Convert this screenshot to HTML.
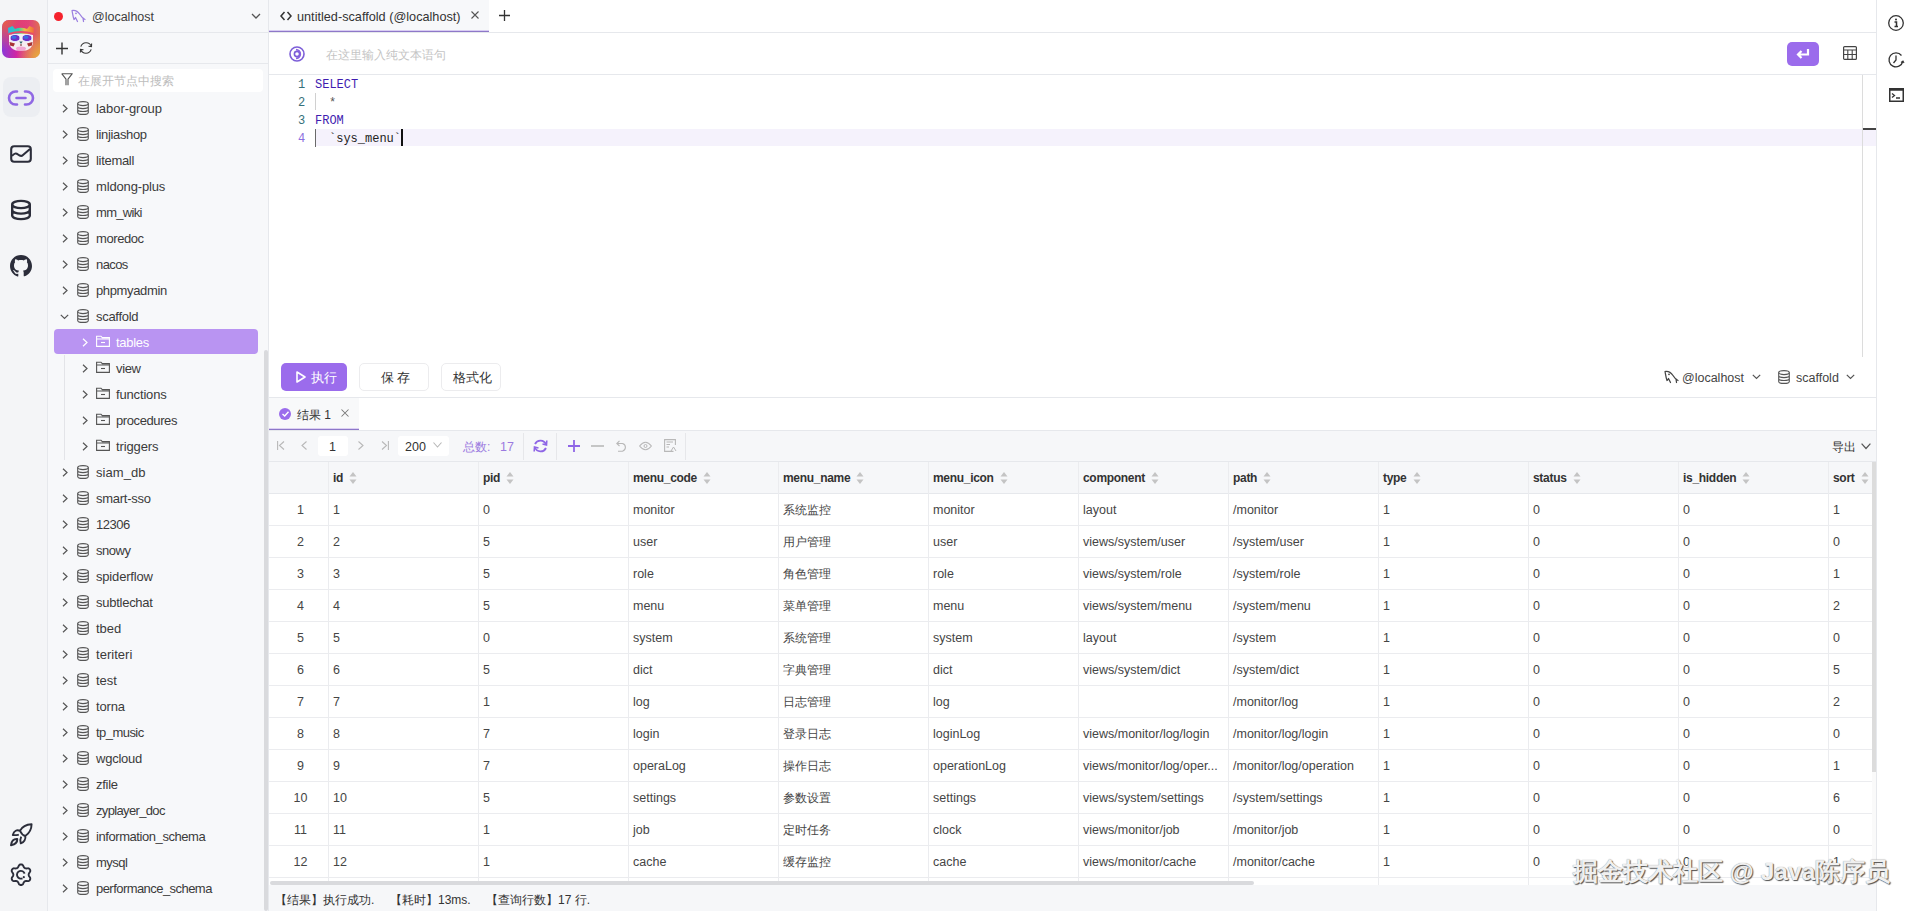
<!DOCTYPE html><html><head><meta charset="utf-8"><style>
*{box-sizing:border-box;margin:0;padding:0}
html,body{width:1914px;height:911px;overflow:hidden;background:#fff;font-family:"Liberation Sans",sans-serif;font-size:13px;color:#3b3b3b}
.abs{position:absolute}
svg{position:absolute;overflow:visible}
.t{position:absolute;white-space:nowrap}
</style></head><body>
<div class="abs" style="left:0px;top:0px;width:47px;height:911px;background:#f4f5f7;"></div>
<div class="abs" style="left:47px;top:0px;width:1px;height:911px;background:#e6e8ec;"></div>
<div class="abs" style="left:2px;top:20px;width:38px;height:38px;border-radius:7px;overflow:hidden;background:linear-gradient(90deg,#8a3ad8 0%,#d424a0 40%,#e0407e 70%,#e07050 100%)">
<div class="abs" style="left:0;top:0;width:38px;height:38px;background:radial-gradient(circle at 0% 0%,#f2603a 0%,rgba(240,80,80,0) 55%)"></div>
<div class="abs" style="left:0;top:0;width:38px;height:38px;background:radial-gradient(circle at 100% 100%,#e8b03a 0%,rgba(230,160,60,0) 45%)"></div>
<svg style="left:0;top:0" width="38" height="38" viewBox="0 0 38 38">
<defs><linearGradient id="fur" x1="0" y1="0" x2="1" y2="0"><stop offset="0" stop-color="#2ab8e0"/><stop offset="0.4" stop-color="#30d0b0"/><stop offset="0.65" stop-color="#f0c040"/><stop offset="1" stop-color="#f06a3a"/></linearGradient></defs>
<path d="M6.5 14 L6 8 L10.5 6 L13 9 Q19 6.5 25 9 L27.5 6 L32 8 L31.5 14 Z" fill="url(#fur)"/>
<path d="M6.5 13 Q19 9 31.5 13 L31.5 15 Q19 11 6.5 15Z" fill="#e84a6a"/>
<path d="M7 15 Q19 12.5 31 15 L31 24 Q29 29 24 30.5 L14 30.5 Q9 29 7 24 Z" fill="#f6eef0"/>
<ellipse cx="13" cy="18" rx="5" ry="3.6" fill="#7030c8" stroke="#e8f4ff" stroke-width="0.9"/>
<ellipse cx="25" cy="18" rx="5" ry="3.6" fill="#7030c8" stroke="#e8f4ff" stroke-width="0.9"/>
<ellipse cx="12" cy="17.3" rx="2.6" ry="1.7" fill="#3a70e0"/>
<ellipse cx="24" cy="17.3" rx="2.6" ry="1.7" fill="#3a70e0"/>
<path d="M7.5 22 L13 23.5 L11.5 26.5 L8 25.5Z M30.5 22 L25 23.5 L26.5 26.5 L30 25.5Z" fill="#a83434"/>
<path d="M17.3 21.5 L20.7 21.5 L19 24Z" fill="#2a6a70"/>
<path d="M19 24 V26" stroke="#6a2020" stroke-width="1"/>
<ellipse cx="19" cy="28.6" rx="5" ry="2.1" fill="#f2a6d2"/>
</svg></div>
<div class="abs" style="left:3px;top:77px;width:37px;height:40px;background:#eceef2;border-radius:8px;"></div>
<svg style="left:8px;top:89px" width="26" height="19" viewBox="0 0 26 19"><path d="M9 2.5 H7.5 A6.5 6.5 0 0 0 7.5 15.5 H9 M17 2.5 H18.5 A6.5 6.5 0 0 1 18.5 15.5 H17 M8.5 9 H17.5" fill="none" stroke="#9068e4" stroke-width="2.6" stroke-linecap="round"/></svg>
<svg style="left:10px;top:145px" width="22" height="18" viewBox="0 0 22 18"><rect x="1.2" y="1.2" width="19.6" height="15.6" rx="3" fill="none" stroke="#2b2d3a" stroke-width="2.1"/><path d="M2 11 Q5 7 8 9.5 T13 10 L20 4" fill="none" stroke="#2b2d3a" stroke-width="2"/></svg>
<svg style="left:11px;top:200px" width="20" height="20" viewBox="0 0 20 20"><ellipse cx="10" cy="4.5" rx="8.8" ry="3.6" fill="none" stroke="#2b2d3a" stroke-width="2.4"/><path d="M1.2 4.5 V15.5 A8.8 3.6 0 0 0 18.8 15.5 V4.5 M1.2 10 A8.8 3.6 0 0 0 18.8 10" fill="none" stroke="#2b2d3a" stroke-width="2.4"/></svg>
<svg style="left:10px;top:255px" width="22" height="22" viewBox="0 0 22 22"><path fill="#2b2d3a" d="M11 0C4.9 0 0 4.9 0 11c0 4.9 3.2 9 7.5 10.5.5.1.8-.2.8-.6v-2.1c-3.1.7-3.7-1.3-3.7-1.3-.5-1.3-1.2-1.6-1.2-1.6-1-.7.1-.7.1-.7 1.1.1 1.7 1.1 1.7 1.1 1 1.7 2.6 1.2 3.2.9.1-.7.4-1.2.7-1.5-2.5-.3-5.1-1.2-5.1-5.4 0-1.2.4-2.2 1.1-3-.1-.3-.5-1.4.1-2.9 0 0 .9-.3 3 1.1.9-.2 1.8-.4 2.8-.4s1.9.1 2.8.4c2.1-1.4 3-1.1 3-1.1.6 1.5.2 2.6.1 2.9.7.8 1.1 1.8 1.1 3 0 4.2-2.6 5.1-5.1 5.4.4.3.8 1 .8 2v3c0 .3.2.7.8.6C18.8 20 22 15.9 22 11 22 4.9 17.1 0 11 0z"/></svg>
<svg style="left:6px;top:818px" width="30" height="32" viewBox="0 0 30 32"><path d="M14 12.8 C16 9 20 6.5 25.6 6.3 C25.5 11 23 15.5 19.3 18 Q16 17 14 12.8 Z M14 12.8 C11 11.5 8 12.5 6.8 17 C9 17.3 11 17 12.8 16.8 M19.3 18 C20 21 18 24.5 14.8 25.4 C14.2 23 14.2 20.5 15.2 18.6 M5 27.2 C5.5 23 8 20.8 11.3 21 C11.5 24.5 8.5 26.5 5 27.2 Z" fill="none" stroke="#2b2d3a" stroke-width="1.9" stroke-linejoin="round"/></svg>
<svg style="left:11px;top:864px" width="20" height="22" viewBox="0 0 20 22"><path d="M17.65 10.70 L17.71 11.21 L17.87 11.74 L18.15 12.32 L18.69 13.03 L19.17 13.81 L19.29 14.55 L19.22 15.25 L18.96 15.87 L18.55 16.41 L17.98 16.82 L17.28 17.09 L16.36 17.06 L15.48 16.95 L14.83 17.00 L14.29 17.12 L13.83 17.33 L13.42 17.63 L13.04 18.04 L12.67 18.57 L12.33 19.39 L11.89 20.20 L11.31 20.67 L10.67 20.96 L10.00 21.05 L9.33 20.96 L8.69 20.67 L8.11 20.20 L7.67 19.39 L7.33 18.57 L6.96 18.04 L6.58 17.63 L6.18 17.33 L5.71 17.12 L5.17 17.00 L4.52 16.95 L3.64 17.06 L2.72 17.09 L2.02 16.82 L1.45 16.41 L1.04 15.87 L0.78 15.25 L0.71 14.55 L0.83 13.81 L1.31 13.03 L1.85 12.32 L2.13 11.74 L2.29 11.21 L2.35 10.70 L2.29 10.19 L2.13 9.66 L1.85 9.08 L1.31 8.37 L0.83 7.59 L0.71 6.85 L0.78 6.15 L1.04 5.53 L1.45 4.99 L2.02 4.58 L2.72 4.31 L3.64 4.34 L4.52 4.45 L5.17 4.40 L5.71 4.28 L6.17 4.07 L6.58 3.77 L6.96 3.36 L7.33 2.83 L7.67 2.01 L8.11 1.20 L8.69 0.73 L9.33 0.44 L10.00 0.35 L10.67 0.44 L11.31 0.73 L11.89 1.20 L12.33 2.01 L12.67 2.83 L13.04 3.36 L13.42 3.77 L13.83 4.07 L14.29 4.28 L14.83 4.40 L15.48 4.45 L16.36 4.34 L17.28 4.31 L17.98 4.58 L18.55 4.99 L18.96 5.52 L19.22 6.15 L19.29 6.85 L19.17 7.59 L18.69 8.37 L18.15 9.08 L17.87 9.66 L17.71 10.19Z" fill="none" stroke="#2b2d3a" stroke-width="1.9" stroke-linejoin="round"/><path d="M13.6 9.6 A3.9 3.9 0 1 0 11.5 14.3" fill="none" stroke="#2b2d3a" stroke-width="1.9"/><circle cx="12.8" cy="13.2" r="1.1" fill="#2b2d3a"/></svg>
<div class="abs" style="left:48px;top:0px;width:220px;height:911px;background:#f7f8fa;"></div>
<div class="abs" style="left:268px;top:0px;width:1px;height:911px;background:#e6e8ec;"></div>
<div class="abs" style="left:48px;top:32px;width:220px;height:1px;background:#e6e8ec;"></div>
<div class="abs" style="left:48px;top:63px;width:220px;height:1px;background:#e6e8ec;"></div>
<div class="abs" style="left:53.5px;top:11.5px;width:9px;height:9px;border-radius:50%;background:#f5222d"></div>
<svg style="left:71px;top:9px" width="14" height="14" viewBox="0 0 14 14"><path d="M1 1.5 C4 1 7 2.5 9 5.5 C10.5 8 12 9.5 14 10.5 M12 9 L12.5 12.5 M1 1.5 C1.5 4 2 8 3 10.5 L4.5 8.5 L6.5 12.5" fill="none" stroke="#9b7fe0" stroke-width="1.25" stroke-linejoin="round" stroke-linecap="round"/><circle cx="5" cy="4.3" r="0.9" fill="#9b7fe0"/></svg>
<div class="t" style="left:92px;top:10px;font-size:12.5px;line-height:14px;color:#3d3d3d;font-weight:normal;">@localhost</div>
<svg style="left:251px;top:13px" width="10" height="7" viewBox="0 0 10 7"><path d="M1 1 L5 5 L9 1" fill="none" stroke="#555" stroke-width="1.3"/></svg>
<svg style="left:56px;top:42px" width="12" height="13" viewBox="0 0 12 13"><path d="M6 0.5 V12.5 M0 6.5 H12" fill="none" stroke="#333" stroke-width="1.4"/></svg>
<svg style="left:79px;top:41px" width="14" height="14" viewBox="0 0 14 14"><path d="M12.3 5.2 A5.6 5.6 0 0 0 1.8 5.6 M1.7 8.8 A5.6 5.6 0 0 0 12.2 8.4" fill="none" stroke="#3a3a3a" stroke-width="1.1"/><path d="M12.6 2.4 L12.5 5.6 L9.5 5.2" fill="none" stroke="#3a3a3a" stroke-width="1.1"/><path d="M1.4 11.6 L1.5 8.4 L4.5 8.8" fill="none" stroke="#3a3a3a" stroke-width="1.1"/></svg>
<div class="abs" style="left:53px;top:69px;width:210px;height:23px;background:#fff;border-radius:4px;"></div>
<svg style="left:61px;top:73px" width="12" height="13" viewBox="0 0 12 13"><path d="M0.7 0.7 H11.3 L7 6.2 V12.3 M5 12.3 V6.2 L0.7 0.7" fill="none" stroke="#555" stroke-width="1.1" stroke-linejoin="round"/></svg>
<div class="t" style="left:78px;top:74px;font-size:12px;line-height:14px;color:#bdbdbd;font-weight:normal;">在展开节点中搜索</div>
<svg style="left:62px;top:104px" width="6" height="9" viewBox="0 0 6 9"><path d="M1 0.8 L5 4.5 L1 8.2" fill="none" stroke="#555" stroke-width="1.2"/></svg>
<svg style="left:77px;top:101px" width="12" height="14" viewBox="0 0 12 14"><ellipse cx="6" cy="2.6" rx="5.3" ry="2" fill="none" stroke="#555" stroke-width="1.1"/><path d="M0.7 2.6 V11.4 A5.3 2 0 0 0 11.3 11.4 V2.6 M0.7 5.6 A5.3 2 0 0 0 11.3 5.6 M0.7 8.5 A5.3 2 0 0 0 11.3 8.5" fill="none" stroke="#555" stroke-width="1.1"/></svg>
<div class="t" style="left:96px;top:101px;font-size:13px;line-height:15px;color:#3b3b3b;font-weight:normal;letter-spacing:-0.05px;">labor-group</div>
<svg style="left:62px;top:130px" width="6" height="9" viewBox="0 0 6 9"><path d="M1 0.8 L5 4.5 L1 8.2" fill="none" stroke="#555" stroke-width="1.2"/></svg>
<svg style="left:77px;top:127px" width="12" height="14" viewBox="0 0 12 14"><ellipse cx="6" cy="2.6" rx="5.3" ry="2" fill="none" stroke="#555" stroke-width="1.1"/><path d="M0.7 2.6 V11.4 A5.3 2 0 0 0 11.3 11.4 V2.6 M0.7 5.6 A5.3 2 0 0 0 11.3 5.6 M0.7 8.5 A5.3 2 0 0 0 11.3 8.5" fill="none" stroke="#555" stroke-width="1.1"/></svg>
<div class="t" style="left:96px;top:127px;font-size:13px;line-height:15px;color:#3b3b3b;font-weight:normal;letter-spacing:-0.35px;">linjiashop</div>
<svg style="left:62px;top:156px" width="6" height="9" viewBox="0 0 6 9"><path d="M1 0.8 L5 4.5 L1 8.2" fill="none" stroke="#555" stroke-width="1.2"/></svg>
<svg style="left:77px;top:153px" width="12" height="14" viewBox="0 0 12 14"><ellipse cx="6" cy="2.6" rx="5.3" ry="2" fill="none" stroke="#555" stroke-width="1.1"/><path d="M0.7 2.6 V11.4 A5.3 2 0 0 0 11.3 11.4 V2.6 M0.7 5.6 A5.3 2 0 0 0 11.3 5.6 M0.7 8.5 A5.3 2 0 0 0 11.3 8.5" fill="none" stroke="#555" stroke-width="1.1"/></svg>
<div class="t" style="left:96px;top:153px;font-size:13px;line-height:15px;color:#3b3b3b;font-weight:normal;letter-spacing:-0.31px;">litemall</div>
<svg style="left:62px;top:182px" width="6" height="9" viewBox="0 0 6 9"><path d="M1 0.8 L5 4.5 L1 8.2" fill="none" stroke="#555" stroke-width="1.2"/></svg>
<svg style="left:77px;top:179px" width="12" height="14" viewBox="0 0 12 14"><ellipse cx="6" cy="2.6" rx="5.3" ry="2" fill="none" stroke="#555" stroke-width="1.1"/><path d="M0.7 2.6 V11.4 A5.3 2 0 0 0 11.3 11.4 V2.6 M0.7 5.6 A5.3 2 0 0 0 11.3 5.6 M0.7 8.5 A5.3 2 0 0 0 11.3 8.5" fill="none" stroke="#555" stroke-width="1.1"/></svg>
<div class="t" style="left:96px;top:179px;font-size:13px;line-height:15px;color:#3b3b3b;font-weight:normal;letter-spacing:-0.15px;">mldong-plus</div>
<svg style="left:62px;top:208px" width="6" height="9" viewBox="0 0 6 9"><path d="M1 0.8 L5 4.5 L1 8.2" fill="none" stroke="#555" stroke-width="1.2"/></svg>
<svg style="left:77px;top:205px" width="12" height="14" viewBox="0 0 12 14"><ellipse cx="6" cy="2.6" rx="5.3" ry="2" fill="none" stroke="#555" stroke-width="1.1"/><path d="M0.7 2.6 V11.4 A5.3 2 0 0 0 11.3 11.4 V2.6 M0.7 5.6 A5.3 2 0 0 0 11.3 5.6 M0.7 8.5 A5.3 2 0 0 0 11.3 8.5" fill="none" stroke="#555" stroke-width="1.1"/></svg>
<div class="t" style="left:96px;top:205px;font-size:13px;line-height:15px;color:#3b3b3b;font-weight:normal;letter-spacing:-0.7px;">mm_wiki</div>
<svg style="left:62px;top:234px" width="6" height="9" viewBox="0 0 6 9"><path d="M1 0.8 L5 4.5 L1 8.2" fill="none" stroke="#555" stroke-width="1.2"/></svg>
<svg style="left:77px;top:231px" width="12" height="14" viewBox="0 0 12 14"><ellipse cx="6" cy="2.6" rx="5.3" ry="2" fill="none" stroke="#555" stroke-width="1.1"/><path d="M0.7 2.6 V11.4 A5.3 2 0 0 0 11.3 11.4 V2.6 M0.7 5.6 A5.3 2 0 0 0 11.3 5.6 M0.7 8.5 A5.3 2 0 0 0 11.3 8.5" fill="none" stroke="#555" stroke-width="1.1"/></svg>
<div class="t" style="left:96px;top:231px;font-size:13px;line-height:15px;color:#3b3b3b;font-weight:normal;letter-spacing:-0.41px;">moredoc</div>
<svg style="left:62px;top:260px" width="6" height="9" viewBox="0 0 6 9"><path d="M1 0.8 L5 4.5 L1 8.2" fill="none" stroke="#555" stroke-width="1.2"/></svg>
<svg style="left:77px;top:257px" width="12" height="14" viewBox="0 0 12 14"><ellipse cx="6" cy="2.6" rx="5.3" ry="2" fill="none" stroke="#555" stroke-width="1.1"/><path d="M0.7 2.6 V11.4 A5.3 2 0 0 0 11.3 11.4 V2.6 M0.7 5.6 A5.3 2 0 0 0 11.3 5.6 M0.7 8.5 A5.3 2 0 0 0 11.3 8.5" fill="none" stroke="#555" stroke-width="1.1"/></svg>
<div class="t" style="left:96px;top:257px;font-size:13px;line-height:15px;color:#3b3b3b;font-weight:normal;letter-spacing:-0.6px;">nacos</div>
<svg style="left:62px;top:286px" width="6" height="9" viewBox="0 0 6 9"><path d="M1 0.8 L5 4.5 L1 8.2" fill="none" stroke="#555" stroke-width="1.2"/></svg>
<svg style="left:77px;top:283px" width="12" height="14" viewBox="0 0 12 14"><ellipse cx="6" cy="2.6" rx="5.3" ry="2" fill="none" stroke="#555" stroke-width="1.1"/><path d="M0.7 2.6 V11.4 A5.3 2 0 0 0 11.3 11.4 V2.6 M0.7 5.6 A5.3 2 0 0 0 11.3 5.6 M0.7 8.5 A5.3 2 0 0 0 11.3 8.5" fill="none" stroke="#555" stroke-width="1.1"/></svg>
<div class="t" style="left:96px;top:283px;font-size:13px;line-height:15px;color:#3b3b3b;font-weight:normal;letter-spacing:-0.36px;">phpmyadmin</div>
<svg style="left:60px;top:314px" width="9" height="6" viewBox="0 0 9 6"><path d="M0.8 0.8 L4.5 4.5 L8.2 0.8" fill="none" stroke="#555" stroke-width="1.2"/></svg>
<svg style="left:77px;top:309px" width="12" height="14" viewBox="0 0 12 14"><ellipse cx="6" cy="2.6" rx="5.3" ry="2" fill="none" stroke="#555" stroke-width="1.1"/><path d="M0.7 2.6 V11.4 A5.3 2 0 0 0 11.3 11.4 V2.6 M0.7 5.6 A5.3 2 0 0 0 11.3 5.6 M0.7 8.5 A5.3 2 0 0 0 11.3 8.5" fill="none" stroke="#555" stroke-width="1.1"/></svg>
<div class="t" style="left:96px;top:309px;font-size:13px;line-height:15px;color:#3b3b3b;font-weight:normal;letter-spacing:-0.3px;">scaffold</div>
<div class="abs" style="left:54px;top:329px;width:204px;height:25px;background:#b994f2;border-radius:4px;"></div>
<svg style="left:82px;top:338px" width="6" height="9" viewBox="0 0 6 9"><path d="M1 0.8 L5 4.5 L1 8.2" fill="none" stroke="#fff" stroke-width="1.2"/></svg>
<svg style="left:96px;top:335px" width="14" height="12" viewBox="0 0 14 12"><path d="M0.6 1.2 H5 L6.3 2.6 H13.4 V11.4 H0.6 Z M0.6 4 H13.4" fill="none" stroke="#fff" stroke-width="1.1"/><path d="M5 7.5 H9" stroke="#fff" stroke-width="1.1"/></svg>
<div class="t" style="left:116px;top:335px;font-size:13px;line-height:15px;color:#fff;font-weight:normal;letter-spacing:-0.28px;">tables</div>
<svg style="left:82px;top:364px" width="6" height="9" viewBox="0 0 6 9"><path d="M1 0.8 L5 4.5 L1 8.2" fill="none" stroke="#555" stroke-width="1.2"/></svg>
<svg style="left:96px;top:361px" width="14" height="12" viewBox="0 0 14 12"><path d="M0.6 1.2 H5 L6.3 2.6 H13.4 V11.4 H0.6 Z M0.6 4 H13.4" fill="none" stroke="#555" stroke-width="1.1"/><path d="M5 7.5 H9" stroke="#555" stroke-width="1.1"/></svg>
<div class="t" style="left:116px;top:361px;font-size:13px;line-height:15px;color:#3b3b3b;font-weight:normal;letter-spacing:-0.35px;">view</div>
<svg style="left:82px;top:390px" width="6" height="9" viewBox="0 0 6 9"><path d="M1 0.8 L5 4.5 L1 8.2" fill="none" stroke="#555" stroke-width="1.2"/></svg>
<svg style="left:96px;top:387px" width="14" height="12" viewBox="0 0 14 12"><path d="M0.6 1.2 H5 L6.3 2.6 H13.4 V11.4 H0.6 Z M0.6 4 H13.4" fill="none" stroke="#555" stroke-width="1.1"/><path d="M5 7.5 H9" stroke="#555" stroke-width="1.1"/></svg>
<div class="t" style="left:116px;top:387px;font-size:13px;line-height:15px;color:#3b3b3b;font-weight:normal;letter-spacing:-0.16px;">functions</div>
<svg style="left:82px;top:416px" width="6" height="9" viewBox="0 0 6 9"><path d="M1 0.8 L5 4.5 L1 8.2" fill="none" stroke="#555" stroke-width="1.2"/></svg>
<svg style="left:96px;top:413px" width="14" height="12" viewBox="0 0 14 12"><path d="M0.6 1.2 H5 L6.3 2.6 H13.4 V11.4 H0.6 Z M0.6 4 H13.4" fill="none" stroke="#555" stroke-width="1.1"/><path d="M5 7.5 H9" stroke="#555" stroke-width="1.1"/></svg>
<div class="t" style="left:116px;top:413px;font-size:13px;line-height:15px;color:#3b3b3b;font-weight:normal;letter-spacing:-0.4px;">procedures</div>
<svg style="left:82px;top:442px" width="6" height="9" viewBox="0 0 6 9"><path d="M1 0.8 L5 4.5 L1 8.2" fill="none" stroke="#555" stroke-width="1.2"/></svg>
<svg style="left:96px;top:439px" width="14" height="12" viewBox="0 0 14 12"><path d="M0.6 1.2 H5 L6.3 2.6 H13.4 V11.4 H0.6 Z M0.6 4 H13.4" fill="none" stroke="#555" stroke-width="1.1"/><path d="M5 7.5 H9" stroke="#555" stroke-width="1.1"/></svg>
<div class="t" style="left:116px;top:439px;font-size:13px;line-height:15px;color:#3b3b3b;font-weight:normal;letter-spacing:-0.11px;">triggers</div>
<svg style="left:62px;top:468px" width="6" height="9" viewBox="0 0 6 9"><path d="M1 0.8 L5 4.5 L1 8.2" fill="none" stroke="#555" stroke-width="1.2"/></svg>
<svg style="left:77px;top:465px" width="12" height="14" viewBox="0 0 12 14"><ellipse cx="6" cy="2.6" rx="5.3" ry="2" fill="none" stroke="#555" stroke-width="1.1"/><path d="M0.7 2.6 V11.4 A5.3 2 0 0 0 11.3 11.4 V2.6 M0.7 5.6 A5.3 2 0 0 0 11.3 5.6 M0.7 8.5 A5.3 2 0 0 0 11.3 8.5" fill="none" stroke="#555" stroke-width="1.1"/></svg>
<div class="t" style="left:96px;top:465px;font-size:13px;line-height:15px;color:#3b3b3b;font-weight:normal;letter-spacing:0.05px;">siam_db</div>
<svg style="left:62px;top:494px" width="6" height="9" viewBox="0 0 6 9"><path d="M1 0.8 L5 4.5 L1 8.2" fill="none" stroke="#555" stroke-width="1.2"/></svg>
<svg style="left:77px;top:491px" width="12" height="14" viewBox="0 0 12 14"><ellipse cx="6" cy="2.6" rx="5.3" ry="2" fill="none" stroke="#555" stroke-width="1.1"/><path d="M0.7 2.6 V11.4 A5.3 2 0 0 0 11.3 11.4 V2.6 M0.7 5.6 A5.3 2 0 0 0 11.3 5.6 M0.7 8.5 A5.3 2 0 0 0 11.3 8.5" fill="none" stroke="#555" stroke-width="1.1"/></svg>
<div class="t" style="left:96px;top:491px;font-size:13px;line-height:15px;color:#3b3b3b;font-weight:normal;letter-spacing:-0.26px;">smart-sso</div>
<svg style="left:62px;top:520px" width="6" height="9" viewBox="0 0 6 9"><path d="M1 0.8 L5 4.5 L1 8.2" fill="none" stroke="#555" stroke-width="1.2"/></svg>
<svg style="left:77px;top:517px" width="12" height="14" viewBox="0 0 12 14"><ellipse cx="6" cy="2.6" rx="5.3" ry="2" fill="none" stroke="#555" stroke-width="1.1"/><path d="M0.7 2.6 V11.4 A5.3 2 0 0 0 11.3 11.4 V2.6 M0.7 5.6 A5.3 2 0 0 0 11.3 5.6 M0.7 8.5 A5.3 2 0 0 0 11.3 8.5" fill="none" stroke="#555" stroke-width="1.1"/></svg>
<div class="t" style="left:96px;top:517px;font-size:13px;line-height:15px;color:#3b3b3b;font-weight:normal;letter-spacing:-0.45px;">12306</div>
<svg style="left:62px;top:546px" width="6" height="9" viewBox="0 0 6 9"><path d="M1 0.8 L5 4.5 L1 8.2" fill="none" stroke="#555" stroke-width="1.2"/></svg>
<svg style="left:77px;top:543px" width="12" height="14" viewBox="0 0 12 14"><ellipse cx="6" cy="2.6" rx="5.3" ry="2" fill="none" stroke="#555" stroke-width="1.1"/><path d="M0.7 2.6 V11.4 A5.3 2 0 0 0 11.3 11.4 V2.6 M0.7 5.6 A5.3 2 0 0 0 11.3 5.6 M0.7 8.5 A5.3 2 0 0 0 11.3 8.5" fill="none" stroke="#555" stroke-width="1.1"/></svg>
<div class="t" style="left:96px;top:543px;font-size:13px;line-height:15px;color:#3b3b3b;font-weight:normal;letter-spacing:-0.49px;">snowy</div>
<svg style="left:62px;top:572px" width="6" height="9" viewBox="0 0 6 9"><path d="M1 0.8 L5 4.5 L1 8.2" fill="none" stroke="#555" stroke-width="1.2"/></svg>
<svg style="left:77px;top:569px" width="12" height="14" viewBox="0 0 12 14"><ellipse cx="6" cy="2.6" rx="5.3" ry="2" fill="none" stroke="#555" stroke-width="1.1"/><path d="M0.7 2.6 V11.4 A5.3 2 0 0 0 11.3 11.4 V2.6 M0.7 5.6 A5.3 2 0 0 0 11.3 5.6 M0.7 8.5 A5.3 2 0 0 0 11.3 8.5" fill="none" stroke="#555" stroke-width="1.1"/></svg>
<div class="t" style="left:96px;top:569px;font-size:13px;line-height:15px;color:#3b3b3b;font-weight:normal;letter-spacing:-0.18px;">spiderflow</div>
<svg style="left:62px;top:598px" width="6" height="9" viewBox="0 0 6 9"><path d="M1 0.8 L5 4.5 L1 8.2" fill="none" stroke="#555" stroke-width="1.2"/></svg>
<svg style="left:77px;top:595px" width="12" height="14" viewBox="0 0 12 14"><ellipse cx="6" cy="2.6" rx="5.3" ry="2" fill="none" stroke="#555" stroke-width="1.1"/><path d="M0.7 2.6 V11.4 A5.3 2 0 0 0 11.3 11.4 V2.6 M0.7 5.6 A5.3 2 0 0 0 11.3 5.6 M0.7 8.5 A5.3 2 0 0 0 11.3 8.5" fill="none" stroke="#555" stroke-width="1.1"/></svg>
<div class="t" style="left:96px;top:595px;font-size:13px;line-height:15px;color:#3b3b3b;font-weight:normal;letter-spacing:-0.26px;">subtlechat</div>
<svg style="left:62px;top:624px" width="6" height="9" viewBox="0 0 6 9"><path d="M1 0.8 L5 4.5 L1 8.2" fill="none" stroke="#555" stroke-width="1.2"/></svg>
<svg style="left:77px;top:621px" width="12" height="14" viewBox="0 0 12 14"><ellipse cx="6" cy="2.6" rx="5.3" ry="2" fill="none" stroke="#555" stroke-width="1.1"/><path d="M0.7 2.6 V11.4 A5.3 2 0 0 0 11.3 11.4 V2.6 M0.7 5.6 A5.3 2 0 0 0 11.3 5.6 M0.7 8.5 A5.3 2 0 0 0 11.3 8.5" fill="none" stroke="#555" stroke-width="1.1"/></svg>
<div class="t" style="left:96px;top:621px;font-size:13px;line-height:15px;color:#3b3b3b;font-weight:normal;letter-spacing:-0.0px;">tbed</div>
<svg style="left:62px;top:650px" width="6" height="9" viewBox="0 0 6 9"><path d="M1 0.8 L5 4.5 L1 8.2" fill="none" stroke="#555" stroke-width="1.2"/></svg>
<svg style="left:77px;top:647px" width="12" height="14" viewBox="0 0 12 14"><ellipse cx="6" cy="2.6" rx="5.3" ry="2" fill="none" stroke="#555" stroke-width="1.1"/><path d="M0.7 2.6 V11.4 A5.3 2 0 0 0 11.3 11.4 V2.6 M0.7 5.6 A5.3 2 0 0 0 11.3 5.6 M0.7 8.5 A5.3 2 0 0 0 11.3 8.5" fill="none" stroke="#555" stroke-width="1.1"/></svg>
<div class="t" style="left:96px;top:647px;font-size:13px;line-height:15px;color:#3b3b3b;font-weight:normal;letter-spacing:0.03px;">teriteri</div>
<svg style="left:62px;top:676px" width="6" height="9" viewBox="0 0 6 9"><path d="M1 0.8 L5 4.5 L1 8.2" fill="none" stroke="#555" stroke-width="1.2"/></svg>
<svg style="left:77px;top:673px" width="12" height="14" viewBox="0 0 12 14"><ellipse cx="6" cy="2.6" rx="5.3" ry="2" fill="none" stroke="#555" stroke-width="1.1"/><path d="M0.7 2.6 V11.4 A5.3 2 0 0 0 11.3 11.4 V2.6 M0.7 5.6 A5.3 2 0 0 0 11.3 5.6 M0.7 8.5 A5.3 2 0 0 0 11.3 8.5" fill="none" stroke="#555" stroke-width="1.1"/></svg>
<div class="t" style="left:96px;top:673px;font-size:13px;line-height:15px;color:#3b3b3b;font-weight:normal;letter-spacing:-0.07px;">test</div>
<svg style="left:62px;top:702px" width="6" height="9" viewBox="0 0 6 9"><path d="M1 0.8 L5 4.5 L1 8.2" fill="none" stroke="#555" stroke-width="1.2"/></svg>
<svg style="left:77px;top:699px" width="12" height="14" viewBox="0 0 12 14"><ellipse cx="6" cy="2.6" rx="5.3" ry="2" fill="none" stroke="#555" stroke-width="1.1"/><path d="M0.7 2.6 V11.4 A5.3 2 0 0 0 11.3 11.4 V2.6 M0.7 5.6 A5.3 2 0 0 0 11.3 5.6 M0.7 8.5 A5.3 2 0 0 0 11.3 8.5" fill="none" stroke="#555" stroke-width="1.1"/></svg>
<div class="t" style="left:96px;top:699px;font-size:13px;line-height:15px;color:#3b3b3b;font-weight:normal;letter-spacing:-0.17px;">torna</div>
<svg style="left:62px;top:728px" width="6" height="9" viewBox="0 0 6 9"><path d="M1 0.8 L5 4.5 L1 8.2" fill="none" stroke="#555" stroke-width="1.2"/></svg>
<svg style="left:77px;top:725px" width="12" height="14" viewBox="0 0 12 14"><ellipse cx="6" cy="2.6" rx="5.3" ry="2" fill="none" stroke="#555" stroke-width="1.1"/><path d="M0.7 2.6 V11.4 A5.3 2 0 0 0 11.3 11.4 V2.6 M0.7 5.6 A5.3 2 0 0 0 11.3 5.6 M0.7 8.5 A5.3 2 0 0 0 11.3 8.5" fill="none" stroke="#555" stroke-width="1.1"/></svg>
<div class="t" style="left:96px;top:725px;font-size:13px;line-height:15px;color:#3b3b3b;font-weight:normal;letter-spacing:-0.55px;">tp_music</div>
<svg style="left:62px;top:754px" width="6" height="9" viewBox="0 0 6 9"><path d="M1 0.8 L5 4.5 L1 8.2" fill="none" stroke="#555" stroke-width="1.2"/></svg>
<svg style="left:77px;top:751px" width="12" height="14" viewBox="0 0 12 14"><ellipse cx="6" cy="2.6" rx="5.3" ry="2" fill="none" stroke="#555" stroke-width="1.1"/><path d="M0.7 2.6 V11.4 A5.3 2 0 0 0 11.3 11.4 V2.6 M0.7 5.6 A5.3 2 0 0 0 11.3 5.6 M0.7 8.5 A5.3 2 0 0 0 11.3 8.5" fill="none" stroke="#555" stroke-width="1.1"/></svg>
<div class="t" style="left:96px;top:751px;font-size:13px;line-height:15px;color:#3b3b3b;font-weight:normal;letter-spacing:-0.24px;">wgcloud</div>
<svg style="left:62px;top:780px" width="6" height="9" viewBox="0 0 6 9"><path d="M1 0.8 L5 4.5 L1 8.2" fill="none" stroke="#555" stroke-width="1.2"/></svg>
<svg style="left:77px;top:777px" width="12" height="14" viewBox="0 0 12 14"><ellipse cx="6" cy="2.6" rx="5.3" ry="2" fill="none" stroke="#555" stroke-width="1.1"/><path d="M0.7 2.6 V11.4 A5.3 2 0 0 0 11.3 11.4 V2.6 M0.7 5.6 A5.3 2 0 0 0 11.3 5.6 M0.7 8.5 A5.3 2 0 0 0 11.3 8.5" fill="none" stroke="#555" stroke-width="1.1"/></svg>
<div class="t" style="left:96px;top:777px;font-size:13px;line-height:15px;color:#3b3b3b;font-weight:normal;letter-spacing:-0.26px;">zfile</div>
<svg style="left:62px;top:806px" width="6" height="9" viewBox="0 0 6 9"><path d="M1 0.8 L5 4.5 L1 8.2" fill="none" stroke="#555" stroke-width="1.2"/></svg>
<svg style="left:77px;top:803px" width="12" height="14" viewBox="0 0 12 14"><ellipse cx="6" cy="2.6" rx="5.3" ry="2" fill="none" stroke="#555" stroke-width="1.1"/><path d="M0.7 2.6 V11.4 A5.3 2 0 0 0 11.3 11.4 V2.6 M0.7 5.6 A5.3 2 0 0 0 11.3 5.6 M0.7 8.5 A5.3 2 0 0 0 11.3 8.5" fill="none" stroke="#555" stroke-width="1.1"/></svg>
<div class="t" style="left:96px;top:803px;font-size:13px;line-height:15px;color:#3b3b3b;font-weight:normal;letter-spacing:-0.65px;">zyplayer_doc</div>
<svg style="left:62px;top:832px" width="6" height="9" viewBox="0 0 6 9"><path d="M1 0.8 L5 4.5 L1 8.2" fill="none" stroke="#555" stroke-width="1.2"/></svg>
<svg style="left:77px;top:829px" width="12" height="14" viewBox="0 0 12 14"><ellipse cx="6" cy="2.6" rx="5.3" ry="2" fill="none" stroke="#555" stroke-width="1.1"/><path d="M0.7 2.6 V11.4 A5.3 2 0 0 0 11.3 11.4 V2.6 M0.7 5.6 A5.3 2 0 0 0 11.3 5.6 M0.7 8.5 A5.3 2 0 0 0 11.3 8.5" fill="none" stroke="#555" stroke-width="1.1"/></svg>
<div class="t" style="left:96px;top:829px;font-size:13px;line-height:15px;color:#3b3b3b;font-weight:normal;letter-spacing:-0.43px;">information_schema</div>
<svg style="left:62px;top:858px" width="6" height="9" viewBox="0 0 6 9"><path d="M1 0.8 L5 4.5 L1 8.2" fill="none" stroke="#555" stroke-width="1.2"/></svg>
<svg style="left:77px;top:855px" width="12" height="14" viewBox="0 0 12 14"><ellipse cx="6" cy="2.6" rx="5.3" ry="2" fill="none" stroke="#555" stroke-width="1.1"/><path d="M0.7 2.6 V11.4 A5.3 2 0 0 0 11.3 11.4 V2.6 M0.7 5.6 A5.3 2 0 0 0 11.3 5.6 M0.7 8.5 A5.3 2 0 0 0 11.3 8.5" fill="none" stroke="#555" stroke-width="1.1"/></svg>
<div class="t" style="left:96px;top:855px;font-size:13px;line-height:15px;color:#3b3b3b;font-weight:normal;letter-spacing:-0.51px;">mysql</div>
<svg style="left:62px;top:884px" width="6" height="9" viewBox="0 0 6 9"><path d="M1 0.8 L5 4.5 L1 8.2" fill="none" stroke="#555" stroke-width="1.2"/></svg>
<svg style="left:77px;top:881px" width="12" height="14" viewBox="0 0 12 14"><ellipse cx="6" cy="2.6" rx="5.3" ry="2" fill="none" stroke="#555" stroke-width="1.1"/><path d="M0.7 2.6 V11.4 A5.3 2 0 0 0 11.3 11.4 V2.6 M0.7 5.6 A5.3 2 0 0 0 11.3 5.6 M0.7 8.5 A5.3 2 0 0 0 11.3 8.5" fill="none" stroke="#555" stroke-width="1.1"/></svg>
<div class="t" style="left:96px;top:881px;font-size:13px;line-height:15px;color:#3b3b3b;font-weight:normal;letter-spacing:-0.55px;">performance_schema</div>
<div class="abs" style="left:64px;top:355px;width:1px;height:105px;background:#e3e4e8;"></div>
<div class="abs" style="left:264px;top:350px;width:4px;height:561px;background:#d9dadd;border-radius:2px;"></div>
<div class="abs" style="left:1876px;top:0px;width:1px;height:911px;background:#e6e8ec;"></div>
<svg style="left:1888px;top:15px" width="16" height="16" viewBox="0 0 16 16"><circle cx="8" cy="8" r="7.3" fill="none" stroke="#333" stroke-width="1.3"/><circle cx="8" cy="4.5" r="1" fill="#333"/><path d="M6.5 7 H8.5 V11.5 M6.5 11.5 H10" fill="none" stroke="#333" stroke-width="1.5"/></svg>
<svg style="left:1888px;top:52px" width="16" height="16" viewBox="0 0 16 16"><path d="M14.8 9.5 A7 7 0 1 1 13.5 3.5" fill="none" stroke="#333" stroke-width="1.3"/><path d="M8 3.5 V8 L5.5 11" fill="none" stroke="#333" stroke-width="1.3"/><path d="M13 10.5 L15 9 L16 11" fill="none" stroke="#333" stroke-width="1.1"/></svg>
<svg style="left:1889px;top:88px" width="15" height="14" viewBox="0 0 15 14"><rect x="0.75" y="0.75" width="13.5" height="12.5" fill="none" stroke="#333" stroke-width="1.5"/><rect x="0.75" y="0.75" width="13.5" height="2" fill="#333"/><path d="M3 5.5 L5.5 7.5 L3 9.5 M7 10 H11" fill="none" stroke="#333" stroke-width="1.3"/></svg>
<div class="abs" style="left:269px;top:0px;width:1607px;height:32px;background:#fff;"></div>
<div class="abs" style="left:269px;top:0px;width:220px;height:31px;background:#f7f8fa;"></div>
<div class="abs" style="left:269px;top:30px;width:220px;height:1px;background:#d9cdf3;"></div>
<div class="abs" style="left:269px;top:31px;width:220px;height:1px;background:#8e78c8;"></div>
<div class="abs" style="left:269px;top:32px;width:1607px;height:1px;background:#e6e8ec;"></div>
<svg style="left:280px;top:11px" width="12" height="10" viewBox="0 0 12 10"><path d="M4.5 1 L1 5 L4.5 9 M7.5 1 L11 5 L7.5 9" fill="none" stroke="#333" stroke-width="1.5"/></svg>
<div class="t" style="left:297px;top:10px;font-size:12.7px;line-height:14px;color:#333;font-weight:normal;">untitled-scaffold (@localhost)</div>
<svg style="left:471px;top:11px" width="8" height="8" viewBox="0 0 8 8"><path d="M0.5 0.5 L7.5 7.5 M7.5 0.5 L0.5 7.5" fill="none" stroke="#555" stroke-width="1.1"/></svg>
<svg style="left:499px;top:10px" width="11" height="11" viewBox="0 0 11 11"><path d="M5.5 0 V11 M0 5.5 H11" fill="none" stroke="#333" stroke-width="1.3"/></svg>
<div class="abs" style="left:269px;top:74px;width:1607px;height:1px;background:#e6e8ec;"></div>
<svg style="left:289px;top:46px" width="16" height="16" viewBox="0 0 16 16"><circle cx="8" cy="8" r="7" fill="none" stroke="#7d5fd8" stroke-width="1.6"/><circle cx="8" cy="8" r="2.6" fill="none" stroke="#7d5fd8" stroke-width="1.6"/><path d="M7 3.6 A4.4 4.4 0 0 1 7 12.4" fill="none" stroke="#8a62e0" stroke-width="1.6"/></svg>
<div class="t" style="left:326px;top:48px;font-size:12px;line-height:14px;color:#c4c4c4;font-weight:normal;">在这里输入纯文本语句</div>
<div class="abs" style="left:1787px;top:42px;width:32px;height:24px;background:#9b6cec;border-radius:5px;"></div>
<svg style="left:1796px;top:48px" width="14" height="11" viewBox="0 0 14 11"><path d="M12 1 V6.5 H2.5 M5.5 3 L2 6.5 L5.5 10" fill="none" stroke="#fff" stroke-width="2.2"/></svg>
<svg style="left:1843px;top:46px" width="14" height="14" viewBox="0 0 14 14"><rect x="0.6" y="0.6" width="12.8" height="12.8" rx="1" fill="none" stroke="#444" stroke-width="1.2"/><path d="M0.6 4 H13.4 M0.6 8.5 H13.4 M4.8 4 V13.4 M9.2 4 V13.4" fill="none" stroke="#444" stroke-width="1.1"/></svg>
<div class="abs" style="left:316px;top:129px;width:1546px;height:17px;background:#f5f2fc;"></div>
<div class="abs" style="left:1863px;top:129px;width:13px;height:17px;background:#f5f2fc;"></div>
<div class="t" style="left:298px;top:78px;font-size:12px;line-height:14px;color:#35707a;font-weight:normal;font-family:'Liberation Mono',monospace;">1</div>
<div class="t" style="left:298px;top:96px;font-size:12px;line-height:14px;color:#35707a;font-weight:normal;font-family:'Liberation Mono',monospace;">2</div>
<div class="t" style="left:298px;top:114px;font-size:12px;line-height:14px;color:#35707a;font-weight:normal;font-family:'Liberation Mono',monospace;">3</div>
<div class="t" style="left:298px;top:132px;font-size:12px;line-height:14px;color:#8c6fe0;font-weight:normal;font-family:'Liberation Mono',monospace;">4</div>
<div class="t" style="left:315px;top:78px;font-size:12px;line-height:14px;color:#3f1cb0;font-weight:normal;font-family:'Liberation Mono',monospace;">SELECT</div>
<div class="t" style="left:329px;top:96px;font-size:12px;line-height:14px;color:#555;font-weight:normal;font-family:'Liberation Mono',monospace;">*</div>
<div class="t" style="left:315px;top:114px;font-size:12px;line-height:14px;color:#3f1cb0;font-weight:normal;font-family:'Liberation Mono',monospace;">FROM</div>
<div class="t" style="left:329px;top:132px;font-size:12px;line-height:14px;color:#222;font-weight:normal;font-family:'Liberation Mono',monospace;">`sys_menu`</div>
<div class="abs" style="left:315px;top:93px;width:1px;height:17px;background:#d0d0d0;"></div>
<div class="abs" style="left:315px;top:129px;width:1px;height:18px;background:#6a6a6a;"></div>
<div class="abs" style="left:401px;top:129px;width:2px;height:17px;background:#111;"></div>
<div class="abs" style="left:1862px;top:75px;width:1px;height:282px;background:#dcdcdc;"></div>
<div class="abs" style="left:1863px;top:128px;width:13px;height:2px;background:#444;"></div>
<div class="abs" style="left:281px;top:363px;width:66px;height:28px;background:#9b6cec;border-radius:5px;"></div>
<svg style="left:296px;top:371px" width="10" height="12" viewBox="0 0 10 12"><path d="M1 1 L9 6 L1 11 Z" fill="none" stroke="#fff" stroke-width="1.6" stroke-linejoin="round"/></svg>
<div class="t" style="left:311px;top:371px;font-size:12.5px;line-height:14px;color:#fff;font-weight:normal;">执行</div>
<div class="abs" style="left:359px;top:363px;width:70px;height:28px;border:1px solid #ececee;border-radius:5px"></div>
<div class="t" style="left:381px;top:371px;font-size:12.5px;line-height:14px;color:#333;font-weight:normal;">保 存</div>
<div class="abs" style="left:441px;top:363px;width:60px;height:28px;border:1px solid #ececee;border-radius:5px"></div>
<div class="t" style="left:453px;top:371px;font-size:12.5px;line-height:14px;color:#333;font-weight:normal;">格式化</div>
<svg style="left:1664px;top:370px" width="14" height="14" viewBox="0 0 14 14"><path d="M1 1.5 C4 1 7 2.5 9 5.5 C10.5 8 12 9.5 14 10.5 M12 9 L12.5 12.5 M1 1.5 C1.5 4 2 8 3 10.5 L4.5 8.5 L6.5 12.5" fill="none" stroke="#444" stroke-width="1.25" stroke-linejoin="round" stroke-linecap="round"/><circle cx="5" cy="4.3" r="0.9" fill="#444"/></svg>
<div class="t" style="left:1682px;top:371px;font-size:12.5px;line-height:14px;color:#444;font-weight:normal;">@localhost</div>
<svg style="left:1752px;top:374px" width="9" height="6" viewBox="0 0 9 6"><path d="M0.8 0.8 L4.5 4.5 L8.2 0.8" fill="none" stroke="#555" stroke-width="1.2"/></svg>
<svg style="left:1778px;top:370px" width="12" height="14" viewBox="0 0 12 14"><ellipse cx="6" cy="2.6" rx="5.3" ry="2" fill="none" stroke="#555" stroke-width="1.1"/><path d="M0.7 2.6 V11.4 A5.3 2 0 0 0 11.3 11.4 V2.6 M0.7 5.6 A5.3 2 0 0 0 11.3 5.6 M0.7 8.5 A5.3 2 0 0 0 11.3 8.5" fill="none" stroke="#555" stroke-width="1.1"/></svg>
<div class="t" style="left:1796px;top:371px;font-size:12.5px;line-height:14px;color:#444;font-weight:normal;">scaffold</div>
<svg style="left:1846px;top:374px" width="9" height="6" viewBox="0 0 9 6"><path d="M0.8 0.8 L4.5 4.5 L8.2 0.8" fill="none" stroke="#555" stroke-width="1.2"/></svg>
<div class="abs" style="left:269px;top:397px;width:1607px;height:1px;background:#e6e8ec;"></div>
<div class="abs" style="left:269px;top:398px;width:90px;height:31px;background:#f8f9fa;"></div>
<div class="abs" style="left:269px;top:428px;width:90px;height:1px;background:#ddd0f4;"></div>
<div class="abs" style="left:269px;top:429px;width:90px;height:1px;background:#8c78c8;"></div>
<div class="abs" style="left:279px;top:408px;width:12px;height:12px;border-radius:50%;background:#9b6cec"></div>
<svg style="left:282px;top:411px" width="7" height="6" viewBox="0 0 7 6"><path d="M0.5 3 L2.7 5 L6.5 0.8" fill="none" stroke="#fff" stroke-width="1.4"/></svg>
<div class="t" style="left:297px;top:408px;font-size:12px;line-height:14px;color:#333;font-weight:normal;">结果 1</div>
<svg style="left:341px;top:409px" width="8" height="8" viewBox="0 0 8 8"><path d="M0.5 0.5 L7.5 7.5 M7.5 0.5 L0.5 7.5" fill="none" stroke="#777" stroke-width="1.05"/></svg>
<div class="abs" style="left:269px;top:430px;width:1607px;height:1px;background:#e6e8ec;"></div>
<div class="abs" style="left:269px;top:431px;width:1607px;height:31px;background:#f6f7f9;"></div>
<div class="abs" style="left:269px;top:461px;width:1607px;height:1px;background:#e6e8ec;"></div>
<svg style="left:277px;top:441px" width="8" height="9" viewBox="0 0 8 9"><path d="M0.6 0 V9 M7 0.5 L2.5 4.5 L7 8.5" fill="none" stroke="#b8b8b8" stroke-width="1.1"/></svg>
<svg style="left:301px;top:441px" width="6" height="9" viewBox="0 0 6 9"><path d="M5.5 0.5 L1 4.5 L5.5 8.5" fill="none" stroke="#b8b8b8" stroke-width="1.1"/></svg>
<div class="abs" style="left:318px;top:436px;width:30px;height:20px;background:#fff;border-radius:3px;"></div>
<div class="t" style="left:329px;top:440px;font-size:12.5px;line-height:14px;color:#333;font-weight:normal;">1</div>
<svg style="left:358px;top:441px" width="6" height="9" viewBox="0 0 6 9"><path d="M0.5 0.5 L5 4.5 L0.5 8.5" fill="none" stroke="#b8b8b8" stroke-width="1.1"/></svg>
<svg style="left:381px;top:441px" width="8" height="9" viewBox="0 0 8 9"><path d="M7.4 0 V9 M1 0.5 L5.5 4.5 L1 8.5" fill="none" stroke="#b8b8b8" stroke-width="1.1"/></svg>
<div class="abs" style="left:398px;top:436px;width:51px;height:20px;background:#fff;border-radius:3px;"></div>
<div class="t" style="left:405px;top:440px;font-size:12.5px;line-height:14px;color:#333;font-weight:normal;">200</div>
<svg style="left:433px;top:442px" width="9" height="6" viewBox="0 0 9 6"><path d="M0.5 0.5 L4.5 5 L8.5 0.5" fill="none" stroke="#b8b8b8" stroke-width="1.1"/></svg>
<div class="t" style="left:463px;top:440px;font-size:12px;line-height:14px;color:#9b7ae0;font-weight:normal;">总数:</div>
<div class="t" style="left:500px;top:440px;font-size:12.5px;line-height:14px;color:#9b7ae0;font-weight:normal;">17</div>
<div class="abs" style="left:523px;top:433px;width:1px;height:27px;background:#e6e7ea;"></div>
<div class="abs" style="left:556px;top:433px;width:1px;height:27px;background:#e6e7ea;"></div>
<div class="abs" style="left:685px;top:433px;width:1px;height:27px;background:#e6e7ea;"></div>
<svg style="left:533px;top:439px" width="15" height="14" viewBox="0 0 15 14"><path d="M13 5.5 A6 6 0 0 0 2 5 M2 8.5 A6 6 0 0 0 13 9" fill="none" stroke="#8f66e6" stroke-width="1.8"/><path d="M13.8 1.5 L13.5 6 L9.5 5" fill="none" stroke="#8f66e6" stroke-width="1.6"/><path d="M1.2 12.5 L1.5 8 L5.5 9" fill="none" stroke="#8f66e6" stroke-width="1.6"/></svg>
<svg style="left:568px;top:440px" width="12" height="12" viewBox="0 0 12 12"><path d="M6 0 V12 M0 6 H12" fill="none" stroke="#8f66e6" stroke-width="1.8"/></svg>
<svg style="left:591px;top:445px" width="13" height="2" viewBox="0 0 13 2"><path d="M0 1 H13" stroke="#c0c0c0" stroke-width="1.8"/></svg>
<svg style="left:616px;top:440px" width="11" height="12" viewBox="0 0 11 12"><path d="M3.5 0.8 L0.8 3.5 L3.5 6 M0.8 3.5 H6.5 A4 4 0 0 1 6.5 11.2 H2" fill="none" stroke="#b8b8b8" stroke-width="1.1"/></svg>
<svg style="left:639px;top:441px" width="13" height="10" viewBox="0 0 13 10"><path d="M0.6 5 Q6.5 -2.5 12.4 5 Q6.5 12.5 0.6 5Z" fill="none" stroke="#b8b8b8" stroke-width="1.1"/><circle cx="6.5" cy="5" r="1.5" fill="none" stroke="#b8b8b8" stroke-width="1"/></svg>
<svg style="left:664px;top:439px" width="12" height="13" viewBox="0 0 12 13"><path d="M9.5 12.4 H0.6 V0.6 H11.4 V6 M2.5 3 H9 M2.5 5.5 H6 M2.5 8 H5" fill="none" stroke="#b8b8b8" stroke-width="1.1"/><path d="M7 12 L9.5 8 L12 12" fill="none" stroke="#b8b8b8" stroke-width="1"/></svg>
<div class="t" style="left:1832px;top:440px;font-size:12px;line-height:14px;color:#333;font-weight:normal;">导出</div>
<svg style="left:1861px;top:443px" width="10" height="7" viewBox="0 0 10 7"><path d="M0.6 0.6 L5 5.5 L9.4 0.6" fill="none" stroke="#555" stroke-width="1.2"/></svg>
<div class="abs" style="left:269px;top:462px;width:1603px;height:31px;background:#f6f7f9;"></div>
<div class="abs" style="left:269px;top:493px;width:1603px;height:1px;background:#e6e8ec;"></div>
<div class="abs" style="left:328px;top:462px;width:1px;height:423px;background:#ebecef;"></div>
<div class="abs" style="left:478px;top:462px;width:1px;height:423px;background:#ebecef;"></div>
<div class="abs" style="left:628px;top:462px;width:1px;height:423px;background:#ebecef;"></div>
<div class="abs" style="left:778px;top:462px;width:1px;height:423px;background:#ebecef;"></div>
<div class="abs" style="left:928px;top:462px;width:1px;height:423px;background:#ebecef;"></div>
<div class="abs" style="left:1078px;top:462px;width:1px;height:423px;background:#ebecef;"></div>
<div class="abs" style="left:1228px;top:462px;width:1px;height:423px;background:#ebecef;"></div>
<div class="abs" style="left:1378px;top:462px;width:1px;height:423px;background:#ebecef;"></div>
<div class="abs" style="left:1528px;top:462px;width:1px;height:423px;background:#ebecef;"></div>
<div class="abs" style="left:1678px;top:462px;width:1px;height:423px;background:#ebecef;"></div>
<div class="abs" style="left:1828px;top:462px;width:1px;height:423px;background:#ebecef;"></div>
<div class="t" style="left:333px;top:471px;font-size:12px;line-height:14px;color:#333;font-weight:bold;letter-spacing:-0.3px;">id</div>
<svg style="left:349.1px;top:472px" width="8" height="12" viewBox="0 0 8 12"><path d="M4 0 L7.5 4.5 H0.5Z M4 12 L7.5 7.5 H0.5Z" fill="#c4c4c4"/></svg>
<div class="t" style="left:483px;top:471px;font-size:12px;line-height:14px;color:#333;font-weight:bold;letter-spacing:-0.3px;">pid</div>
<svg style="left:506.1px;top:472px" width="8" height="12" viewBox="0 0 8 12"><path d="M4 0 L7.5 4.5 H0.5Z M4 12 L7.5 7.5 H0.5Z" fill="#c4c4c4"/></svg>
<div class="t" style="left:633px;top:471px;font-size:12px;line-height:14px;color:#333;font-weight:bold;letter-spacing:-0.3px;">menu_code</div>
<svg style="left:703px;top:472px" width="8" height="12" viewBox="0 0 8 12"><path d="M4 0 L7.5 4.5 H0.5Z M4 12 L7.5 7.5 H0.5Z" fill="#c4c4c4"/></svg>
<div class="t" style="left:783px;top:471px;font-size:12px;line-height:14px;color:#333;font-weight:bold;letter-spacing:-0.3px;">menu_name</div>
<svg style="left:856.3px;top:472px" width="8" height="12" viewBox="0 0 8 12"><path d="M4 0 L7.5 4.5 H0.5Z M4 12 L7.5 7.5 H0.5Z" fill="#c4c4c4"/></svg>
<div class="t" style="left:933px;top:471px;font-size:12px;line-height:14px;color:#333;font-weight:bold;letter-spacing:-0.3px;">menu_icon</div>
<svg style="left:999.7px;top:472px" width="8" height="12" viewBox="0 0 8 12"><path d="M4 0 L7.5 4.5 H0.5Z M4 12 L7.5 7.5 H0.5Z" fill="#c4c4c4"/></svg>
<div class="t" style="left:1083px;top:471px;font-size:12px;line-height:14px;color:#333;font-weight:bold;letter-spacing:-0.3px;">component</div>
<svg style="left:1151.0px;top:472px" width="8" height="12" viewBox="0 0 8 12"><path d="M4 0 L7.5 4.5 H0.5Z M4 12 L7.5 7.5 H0.5Z" fill="#c4c4c4"/></svg>
<div class="t" style="left:1233px;top:471px;font-size:12px;line-height:14px;color:#333;font-weight:bold;letter-spacing:-0.3px;">path</div>
<svg style="left:1263.1px;top:472px" width="8" height="12" viewBox="0 0 8 12"><path d="M4 0 L7.5 4.5 H0.5Z M4 12 L7.5 7.5 H0.5Z" fill="#c4c4c4"/></svg>
<div class="t" style="left:1383px;top:471px;font-size:12px;line-height:14px;color:#333;font-weight:bold;letter-spacing:-0.3px;">type</div>
<svg style="left:1412.5px;top:472px" width="8" height="12" viewBox="0 0 8 12"><path d="M4 0 L7.5 4.5 H0.5Z M4 12 L7.5 7.5 H0.5Z" fill="#c4c4c4"/></svg>
<div class="t" style="left:1533px;top:471px;font-size:12px;line-height:14px;color:#333;font-weight:bold;letter-spacing:-0.3px;">status</div>
<svg style="left:1572.5px;top:472px" width="8" height="12" viewBox="0 0 8 12"><path d="M4 0 L7.5 4.5 H0.5Z M4 12 L7.5 7.5 H0.5Z" fill="#c4c4c4"/></svg>
<div class="t" style="left:1683px;top:471px;font-size:12px;line-height:14px;color:#333;font-weight:bold;letter-spacing:-0.3px;">is_hidden</div>
<svg style="left:1742.3px;top:472px" width="8" height="12" viewBox="0 0 8 12"><path d="M4 0 L7.5 4.5 H0.5Z M4 12 L7.5 7.5 H0.5Z" fill="#c4c4c4"/></svg>
<div class="t" style="left:1833px;top:471px;font-size:12px;line-height:14px;color:#333;font-weight:bold;letter-spacing:-0.3px;">sort</div>
<svg style="left:1860.5px;top:472px" width="8" height="12" viewBox="0 0 8 12"><path d="M4 0 L7.5 4.5 H0.5Z M4 12 L7.5 7.5 H0.5Z" fill="#c4c4c4"/></svg>
<div class="abs" style="left:269px;top:525px;width:1603px;height:1px;background:#ebecef;"></div>
<div class="t" style="left:270px;top:503px;font-size:12.5px;line-height:14px;color:#454545;font-weight:normal;width:61px;text-align:center;">1</div>
<div class="t" style="left:333px;top:503px;font-size:12.5px;line-height:14px;color:#454545;font-weight:normal;">1</div>
<div class="t" style="left:483px;top:503px;font-size:12.5px;line-height:14px;color:#454545;font-weight:normal;">0</div>
<div class="t" style="left:633px;top:503px;font-size:12.5px;line-height:14px;color:#454545;font-weight:normal;">monitor</div>
<div class="t" style="left:783px;top:503px;font-size:12px;line-height:14px;color:#454545;font-weight:normal;">系统监控</div>
<div class="t" style="left:933px;top:503px;font-size:12.5px;line-height:14px;color:#454545;font-weight:normal;">monitor</div>
<div class="t" style="left:1083px;top:503px;font-size:12.5px;line-height:14px;color:#454545;font-weight:normal;">layout</div>
<div class="t" style="left:1233px;top:503px;font-size:12.5px;line-height:14px;color:#454545;font-weight:normal;">/monitor</div>
<div class="t" style="left:1383px;top:503px;font-size:12.5px;line-height:14px;color:#454545;font-weight:normal;">1</div>
<div class="t" style="left:1533px;top:503px;font-size:12.5px;line-height:14px;color:#454545;font-weight:normal;">0</div>
<div class="t" style="left:1683px;top:503px;font-size:12.5px;line-height:14px;color:#454545;font-weight:normal;">0</div>
<div class="t" style="left:1833px;top:503px;font-size:12.5px;line-height:14px;color:#454545;font-weight:normal;">1</div>
<div class="abs" style="left:269px;top:557px;width:1603px;height:1px;background:#ebecef;"></div>
<div class="t" style="left:270px;top:535px;font-size:12.5px;line-height:14px;color:#454545;font-weight:normal;width:61px;text-align:center;">2</div>
<div class="t" style="left:333px;top:535px;font-size:12.5px;line-height:14px;color:#454545;font-weight:normal;">2</div>
<div class="t" style="left:483px;top:535px;font-size:12.5px;line-height:14px;color:#454545;font-weight:normal;">5</div>
<div class="t" style="left:633px;top:535px;font-size:12.5px;line-height:14px;color:#454545;font-weight:normal;">user</div>
<div class="t" style="left:783px;top:535px;font-size:12px;line-height:14px;color:#454545;font-weight:normal;">用户管理</div>
<div class="t" style="left:933px;top:535px;font-size:12.5px;line-height:14px;color:#454545;font-weight:normal;">user</div>
<div class="t" style="left:1083px;top:535px;font-size:12.5px;line-height:14px;color:#454545;font-weight:normal;">views/system/user</div>
<div class="t" style="left:1233px;top:535px;font-size:12.5px;line-height:14px;color:#454545;font-weight:normal;">/system/user</div>
<div class="t" style="left:1383px;top:535px;font-size:12.5px;line-height:14px;color:#454545;font-weight:normal;">1</div>
<div class="t" style="left:1533px;top:535px;font-size:12.5px;line-height:14px;color:#454545;font-weight:normal;">0</div>
<div class="t" style="left:1683px;top:535px;font-size:12.5px;line-height:14px;color:#454545;font-weight:normal;">0</div>
<div class="t" style="left:1833px;top:535px;font-size:12.5px;line-height:14px;color:#454545;font-weight:normal;">0</div>
<div class="abs" style="left:269px;top:589px;width:1603px;height:1px;background:#ebecef;"></div>
<div class="t" style="left:270px;top:567px;font-size:12.5px;line-height:14px;color:#454545;font-weight:normal;width:61px;text-align:center;">3</div>
<div class="t" style="left:333px;top:567px;font-size:12.5px;line-height:14px;color:#454545;font-weight:normal;">3</div>
<div class="t" style="left:483px;top:567px;font-size:12.5px;line-height:14px;color:#454545;font-weight:normal;">5</div>
<div class="t" style="left:633px;top:567px;font-size:12.5px;line-height:14px;color:#454545;font-weight:normal;">role</div>
<div class="t" style="left:783px;top:567px;font-size:12px;line-height:14px;color:#454545;font-weight:normal;">角色管理</div>
<div class="t" style="left:933px;top:567px;font-size:12.5px;line-height:14px;color:#454545;font-weight:normal;">role</div>
<div class="t" style="left:1083px;top:567px;font-size:12.5px;line-height:14px;color:#454545;font-weight:normal;">views/system/role</div>
<div class="t" style="left:1233px;top:567px;font-size:12.5px;line-height:14px;color:#454545;font-weight:normal;">/system/role</div>
<div class="t" style="left:1383px;top:567px;font-size:12.5px;line-height:14px;color:#454545;font-weight:normal;">1</div>
<div class="t" style="left:1533px;top:567px;font-size:12.5px;line-height:14px;color:#454545;font-weight:normal;">0</div>
<div class="t" style="left:1683px;top:567px;font-size:12.5px;line-height:14px;color:#454545;font-weight:normal;">0</div>
<div class="t" style="left:1833px;top:567px;font-size:12.5px;line-height:14px;color:#454545;font-weight:normal;">1</div>
<div class="abs" style="left:269px;top:621px;width:1603px;height:1px;background:#ebecef;"></div>
<div class="t" style="left:270px;top:599px;font-size:12.5px;line-height:14px;color:#454545;font-weight:normal;width:61px;text-align:center;">4</div>
<div class="t" style="left:333px;top:599px;font-size:12.5px;line-height:14px;color:#454545;font-weight:normal;">4</div>
<div class="t" style="left:483px;top:599px;font-size:12.5px;line-height:14px;color:#454545;font-weight:normal;">5</div>
<div class="t" style="left:633px;top:599px;font-size:12.5px;line-height:14px;color:#454545;font-weight:normal;">menu</div>
<div class="t" style="left:783px;top:599px;font-size:12px;line-height:14px;color:#454545;font-weight:normal;">菜单管理</div>
<div class="t" style="left:933px;top:599px;font-size:12.5px;line-height:14px;color:#454545;font-weight:normal;">menu</div>
<div class="t" style="left:1083px;top:599px;font-size:12.5px;line-height:14px;color:#454545;font-weight:normal;">views/system/menu</div>
<div class="t" style="left:1233px;top:599px;font-size:12.5px;line-height:14px;color:#454545;font-weight:normal;">/system/menu</div>
<div class="t" style="left:1383px;top:599px;font-size:12.5px;line-height:14px;color:#454545;font-weight:normal;">1</div>
<div class="t" style="left:1533px;top:599px;font-size:12.5px;line-height:14px;color:#454545;font-weight:normal;">0</div>
<div class="t" style="left:1683px;top:599px;font-size:12.5px;line-height:14px;color:#454545;font-weight:normal;">0</div>
<div class="t" style="left:1833px;top:599px;font-size:12.5px;line-height:14px;color:#454545;font-weight:normal;">2</div>
<div class="abs" style="left:269px;top:653px;width:1603px;height:1px;background:#ebecef;"></div>
<div class="t" style="left:270px;top:631px;font-size:12.5px;line-height:14px;color:#454545;font-weight:normal;width:61px;text-align:center;">5</div>
<div class="t" style="left:333px;top:631px;font-size:12.5px;line-height:14px;color:#454545;font-weight:normal;">5</div>
<div class="t" style="left:483px;top:631px;font-size:12.5px;line-height:14px;color:#454545;font-weight:normal;">0</div>
<div class="t" style="left:633px;top:631px;font-size:12.5px;line-height:14px;color:#454545;font-weight:normal;">system</div>
<div class="t" style="left:783px;top:631px;font-size:12px;line-height:14px;color:#454545;font-weight:normal;">系统管理</div>
<div class="t" style="left:933px;top:631px;font-size:12.5px;line-height:14px;color:#454545;font-weight:normal;">system</div>
<div class="t" style="left:1083px;top:631px;font-size:12.5px;line-height:14px;color:#454545;font-weight:normal;">layout</div>
<div class="t" style="left:1233px;top:631px;font-size:12.5px;line-height:14px;color:#454545;font-weight:normal;">/system</div>
<div class="t" style="left:1383px;top:631px;font-size:12.5px;line-height:14px;color:#454545;font-weight:normal;">1</div>
<div class="t" style="left:1533px;top:631px;font-size:12.5px;line-height:14px;color:#454545;font-weight:normal;">0</div>
<div class="t" style="left:1683px;top:631px;font-size:12.5px;line-height:14px;color:#454545;font-weight:normal;">0</div>
<div class="t" style="left:1833px;top:631px;font-size:12.5px;line-height:14px;color:#454545;font-weight:normal;">0</div>
<div class="abs" style="left:269px;top:685px;width:1603px;height:1px;background:#ebecef;"></div>
<div class="t" style="left:270px;top:663px;font-size:12.5px;line-height:14px;color:#454545;font-weight:normal;width:61px;text-align:center;">6</div>
<div class="t" style="left:333px;top:663px;font-size:12.5px;line-height:14px;color:#454545;font-weight:normal;">6</div>
<div class="t" style="left:483px;top:663px;font-size:12.5px;line-height:14px;color:#454545;font-weight:normal;">5</div>
<div class="t" style="left:633px;top:663px;font-size:12.5px;line-height:14px;color:#454545;font-weight:normal;">dict</div>
<div class="t" style="left:783px;top:663px;font-size:12px;line-height:14px;color:#454545;font-weight:normal;">字典管理</div>
<div class="t" style="left:933px;top:663px;font-size:12.5px;line-height:14px;color:#454545;font-weight:normal;">dict</div>
<div class="t" style="left:1083px;top:663px;font-size:12.5px;line-height:14px;color:#454545;font-weight:normal;">views/system/dict</div>
<div class="t" style="left:1233px;top:663px;font-size:12.5px;line-height:14px;color:#454545;font-weight:normal;">/system/dict</div>
<div class="t" style="left:1383px;top:663px;font-size:12.5px;line-height:14px;color:#454545;font-weight:normal;">1</div>
<div class="t" style="left:1533px;top:663px;font-size:12.5px;line-height:14px;color:#454545;font-weight:normal;">0</div>
<div class="t" style="left:1683px;top:663px;font-size:12.5px;line-height:14px;color:#454545;font-weight:normal;">0</div>
<div class="t" style="left:1833px;top:663px;font-size:12.5px;line-height:14px;color:#454545;font-weight:normal;">5</div>
<div class="abs" style="left:269px;top:717px;width:1603px;height:1px;background:#ebecef;"></div>
<div class="t" style="left:270px;top:695px;font-size:12.5px;line-height:14px;color:#454545;font-weight:normal;width:61px;text-align:center;">7</div>
<div class="t" style="left:333px;top:695px;font-size:12.5px;line-height:14px;color:#454545;font-weight:normal;">7</div>
<div class="t" style="left:483px;top:695px;font-size:12.5px;line-height:14px;color:#454545;font-weight:normal;">1</div>
<div class="t" style="left:633px;top:695px;font-size:12.5px;line-height:14px;color:#454545;font-weight:normal;">log</div>
<div class="t" style="left:783px;top:695px;font-size:12px;line-height:14px;color:#454545;font-weight:normal;">日志管理</div>
<div class="t" style="left:933px;top:695px;font-size:12.5px;line-height:14px;color:#454545;font-weight:normal;">log</div>
<div class="t" style="left:1083px;top:695px;font-size:12.5px;line-height:14px;color:#454545;font-weight:normal;"></div>
<div class="t" style="left:1233px;top:695px;font-size:12.5px;line-height:14px;color:#454545;font-weight:normal;">/monitor/log</div>
<div class="t" style="left:1383px;top:695px;font-size:12.5px;line-height:14px;color:#454545;font-weight:normal;">1</div>
<div class="t" style="left:1533px;top:695px;font-size:12.5px;line-height:14px;color:#454545;font-weight:normal;">0</div>
<div class="t" style="left:1683px;top:695px;font-size:12.5px;line-height:14px;color:#454545;font-weight:normal;">0</div>
<div class="t" style="left:1833px;top:695px;font-size:12.5px;line-height:14px;color:#454545;font-weight:normal;">2</div>
<div class="abs" style="left:269px;top:749px;width:1603px;height:1px;background:#ebecef;"></div>
<div class="t" style="left:270px;top:727px;font-size:12.5px;line-height:14px;color:#454545;font-weight:normal;width:61px;text-align:center;">8</div>
<div class="t" style="left:333px;top:727px;font-size:12.5px;line-height:14px;color:#454545;font-weight:normal;">8</div>
<div class="t" style="left:483px;top:727px;font-size:12.5px;line-height:14px;color:#454545;font-weight:normal;">7</div>
<div class="t" style="left:633px;top:727px;font-size:12.5px;line-height:14px;color:#454545;font-weight:normal;">login</div>
<div class="t" style="left:783px;top:727px;font-size:12px;line-height:14px;color:#454545;font-weight:normal;">登录日志</div>
<div class="t" style="left:933px;top:727px;font-size:12.5px;line-height:14px;color:#454545;font-weight:normal;">loginLog</div>
<div class="t" style="left:1083px;top:727px;font-size:12.5px;line-height:14px;color:#454545;font-weight:normal;">views/monitor/log/login</div>
<div class="t" style="left:1233px;top:727px;font-size:12.5px;line-height:14px;color:#454545;font-weight:normal;">/monitor/log/login</div>
<div class="t" style="left:1383px;top:727px;font-size:12.5px;line-height:14px;color:#454545;font-weight:normal;">1</div>
<div class="t" style="left:1533px;top:727px;font-size:12.5px;line-height:14px;color:#454545;font-weight:normal;">0</div>
<div class="t" style="left:1683px;top:727px;font-size:12.5px;line-height:14px;color:#454545;font-weight:normal;">0</div>
<div class="t" style="left:1833px;top:727px;font-size:12.5px;line-height:14px;color:#454545;font-weight:normal;">0</div>
<div class="abs" style="left:269px;top:781px;width:1603px;height:1px;background:#ebecef;"></div>
<div class="t" style="left:270px;top:759px;font-size:12.5px;line-height:14px;color:#454545;font-weight:normal;width:61px;text-align:center;">9</div>
<div class="t" style="left:333px;top:759px;font-size:12.5px;line-height:14px;color:#454545;font-weight:normal;">9</div>
<div class="t" style="left:483px;top:759px;font-size:12.5px;line-height:14px;color:#454545;font-weight:normal;">7</div>
<div class="t" style="left:633px;top:759px;font-size:12.5px;line-height:14px;color:#454545;font-weight:normal;">operaLog</div>
<div class="t" style="left:783px;top:759px;font-size:12px;line-height:14px;color:#454545;font-weight:normal;">操作日志</div>
<div class="t" style="left:933px;top:759px;font-size:12.5px;line-height:14px;color:#454545;font-weight:normal;">operationLog</div>
<div class="t" style="left:1083px;top:759px;font-size:12.5px;line-height:14px;color:#454545;font-weight:normal;">views/monitor/log/oper...</div>
<div class="t" style="left:1233px;top:759px;font-size:12.5px;line-height:14px;color:#454545;font-weight:normal;">/monitor/log/operation</div>
<div class="t" style="left:1383px;top:759px;font-size:12.5px;line-height:14px;color:#454545;font-weight:normal;">1</div>
<div class="t" style="left:1533px;top:759px;font-size:12.5px;line-height:14px;color:#454545;font-weight:normal;">0</div>
<div class="t" style="left:1683px;top:759px;font-size:12.5px;line-height:14px;color:#454545;font-weight:normal;">0</div>
<div class="t" style="left:1833px;top:759px;font-size:12.5px;line-height:14px;color:#454545;font-weight:normal;">1</div>
<div class="abs" style="left:269px;top:813px;width:1603px;height:1px;background:#ebecef;"></div>
<div class="t" style="left:270px;top:791px;font-size:12.5px;line-height:14px;color:#454545;font-weight:normal;width:61px;text-align:center;">10</div>
<div class="t" style="left:333px;top:791px;font-size:12.5px;line-height:14px;color:#454545;font-weight:normal;">10</div>
<div class="t" style="left:483px;top:791px;font-size:12.5px;line-height:14px;color:#454545;font-weight:normal;">5</div>
<div class="t" style="left:633px;top:791px;font-size:12.5px;line-height:14px;color:#454545;font-weight:normal;">settings</div>
<div class="t" style="left:783px;top:791px;font-size:12px;line-height:14px;color:#454545;font-weight:normal;">参数设置</div>
<div class="t" style="left:933px;top:791px;font-size:12.5px;line-height:14px;color:#454545;font-weight:normal;">settings</div>
<div class="t" style="left:1083px;top:791px;font-size:12.5px;line-height:14px;color:#454545;font-weight:normal;">views/system/settings</div>
<div class="t" style="left:1233px;top:791px;font-size:12.5px;line-height:14px;color:#454545;font-weight:normal;">/system/settings</div>
<div class="t" style="left:1383px;top:791px;font-size:12.5px;line-height:14px;color:#454545;font-weight:normal;">1</div>
<div class="t" style="left:1533px;top:791px;font-size:12.5px;line-height:14px;color:#454545;font-weight:normal;">0</div>
<div class="t" style="left:1683px;top:791px;font-size:12.5px;line-height:14px;color:#454545;font-weight:normal;">0</div>
<div class="t" style="left:1833px;top:791px;font-size:12.5px;line-height:14px;color:#454545;font-weight:normal;">6</div>
<div class="abs" style="left:269px;top:845px;width:1603px;height:1px;background:#ebecef;"></div>
<div class="t" style="left:270px;top:823px;font-size:12.5px;line-height:14px;color:#454545;font-weight:normal;width:61px;text-align:center;">11</div>
<div class="t" style="left:333px;top:823px;font-size:12.5px;line-height:14px;color:#454545;font-weight:normal;">11</div>
<div class="t" style="left:483px;top:823px;font-size:12.5px;line-height:14px;color:#454545;font-weight:normal;">1</div>
<div class="t" style="left:633px;top:823px;font-size:12.5px;line-height:14px;color:#454545;font-weight:normal;">job</div>
<div class="t" style="left:783px;top:823px;font-size:12px;line-height:14px;color:#454545;font-weight:normal;">定时任务</div>
<div class="t" style="left:933px;top:823px;font-size:12.5px;line-height:14px;color:#454545;font-weight:normal;">clock</div>
<div class="t" style="left:1083px;top:823px;font-size:12.5px;line-height:14px;color:#454545;font-weight:normal;">views/monitor/job</div>
<div class="t" style="left:1233px;top:823px;font-size:12.5px;line-height:14px;color:#454545;font-weight:normal;">/monitor/job</div>
<div class="t" style="left:1383px;top:823px;font-size:12.5px;line-height:14px;color:#454545;font-weight:normal;">1</div>
<div class="t" style="left:1533px;top:823px;font-size:12.5px;line-height:14px;color:#454545;font-weight:normal;">0</div>
<div class="t" style="left:1683px;top:823px;font-size:12.5px;line-height:14px;color:#454545;font-weight:normal;">0</div>
<div class="t" style="left:1833px;top:823px;font-size:12.5px;line-height:14px;color:#454545;font-weight:normal;">0</div>
<div class="abs" style="left:269px;top:877px;width:1603px;height:1px;background:#ebecef;"></div>
<div class="t" style="left:270px;top:855px;font-size:12.5px;line-height:14px;color:#454545;font-weight:normal;width:61px;text-align:center;">12</div>
<div class="t" style="left:333px;top:855px;font-size:12.5px;line-height:14px;color:#454545;font-weight:normal;">12</div>
<div class="t" style="left:483px;top:855px;font-size:12.5px;line-height:14px;color:#454545;font-weight:normal;">1</div>
<div class="t" style="left:633px;top:855px;font-size:12.5px;line-height:14px;color:#454545;font-weight:normal;">cache</div>
<div class="t" style="left:783px;top:855px;font-size:12px;line-height:14px;color:#454545;font-weight:normal;">缓存监控</div>
<div class="t" style="left:933px;top:855px;font-size:12.5px;line-height:14px;color:#454545;font-weight:normal;">cache</div>
<div class="t" style="left:1083px;top:855px;font-size:12.5px;line-height:14px;color:#454545;font-weight:normal;">views/monitor/cache</div>
<div class="t" style="left:1233px;top:855px;font-size:12.5px;line-height:14px;color:#454545;font-weight:normal;">/monitor/cache</div>
<div class="t" style="left:1383px;top:855px;font-size:12.5px;line-height:14px;color:#454545;font-weight:normal;">1</div>
<div class="t" style="left:1533px;top:855px;font-size:12.5px;line-height:14px;color:#454545;font-weight:normal;">0</div>
<div class="t" style="left:1683px;top:855px;font-size:12.5px;line-height:14px;color:#454545;font-weight:normal;">0</div>
<div class="t" style="left:1833px;top:855px;font-size:12.5px;line-height:14px;color:#454545;font-weight:normal;">1</div>
<div class="abs" style="left:1872px;top:462px;width:4px;height:423px;background:#fafafa;"></div>
<div class="abs" style="left:1872px;top:462px;width:4px;height:310px;background:#dcdcdc;"></div>
<div class="abs" style="left:270px;top:881px;width:984px;height:4px;background:#d9dadd;border-radius:2px;"></div>
<div class="abs" style="left:269px;top:885px;width:1607px;height:26px;background:#f6f7f9;"></div>
<div class="t" style="left:275px;top:893px;font-size:12px;line-height:14px;color:#333;font-weight:normal;">【结果】执行成功.</div>
<div class="t" style="left:390px;top:893px;font-size:12px;line-height:14px;color:#333;font-weight:normal;">【耗时】13ms.</div>
<div class="t" style="left:486px;top:893px;font-size:12px;line-height:14px;color:#333;font-weight:normal;">【查询行数】17 行.</div>
<div class="t" style="left:1573px;top:855px;font-size:24.6px;line-height:34px;color:#f0f0f0;font-weight:bold;text-shadow:1px 1px 1px #505050,0 0 1px #888">掘金技术社区 @ Java陈序员</div>
</body></html>
